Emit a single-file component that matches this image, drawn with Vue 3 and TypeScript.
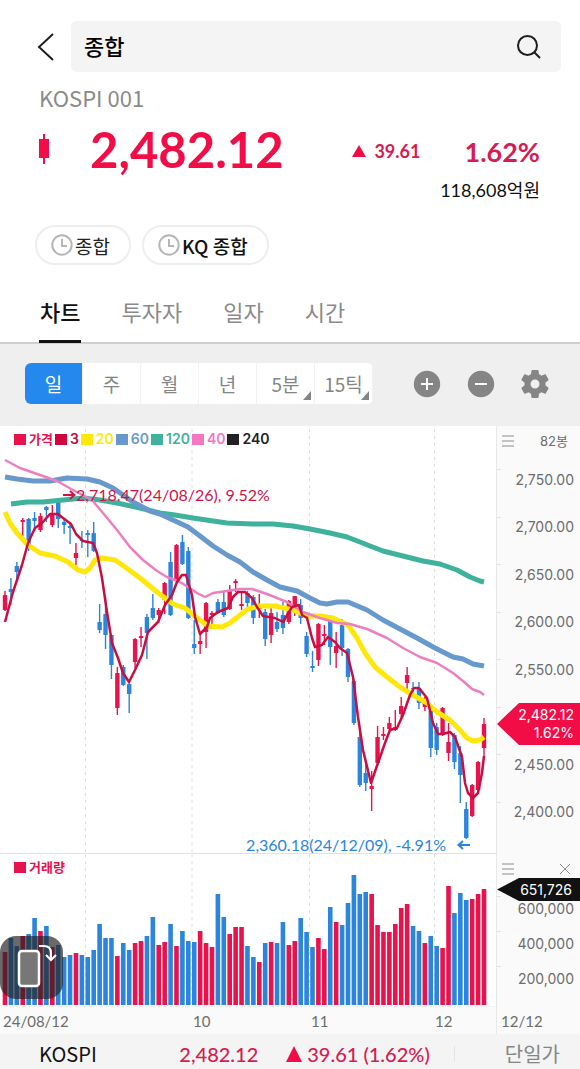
<script setup lang="ts">
import { ref } from 'vue'

type Bar = [dir: 'u' | 'd', high: number, top: number, bottom: number, low: number, volume: number]

const bars: Bar[] = [
  ['u', 165, 169, 184, 185, 53], ['d', 152, 163, 166, 179, 67], ['d', 136, 140, 146, 156, 59],
  ['u', 92, 94, 96, 110, 69], ['d', 92, 93, 119, 125, 71], ['d', 86, 92, 95, 105, 87],
  ['u', 87, 90, 104, 106, 74], ['d', 80, 81, 84, 96, 79], ['u', 79, 88, 99, 101, 58],
  ['d', 74, 76, 93, 102, 60], ['d', 92, 96, 99, 108, 48], ['d', 96, 100, 102, 118, 50],
  ['u', 117, 127, 132, 139, 52], ['d', 105, 114, 115, 122, 50], ['d', 104, 107, 109, 131, 48],
  ['d', 96, 107, 125, 126, 55], ['d', 178, 196, 204, 207, 81], ['d', 171, 188, 209, 223, 67],
  ['d', 208, 209, 239, 253, 67], ['u', 241, 247, 282, 289, 49], ['d', 239, 241, 259, 260, 62],
  ['d', 256, 258, 268, 287, 55], ['u', 212, 213, 236, 242, 62], ['u', 201, 210, 212, 221, 64],
  ['d', 188, 191, 207, 233, 69], ['d', 168, 182, 192, 194, 88], ['u', 182, 184, 189, 197, 60],
  ['u', 156, 157, 174, 188, 63], ['d', 126, 136, 189, 190, 81], ['u', 118, 119, 154, 155, 59],
  ['d', 109, 116, 138, 139, 74], ['d', 121, 125, 192, 193, 64], ['d', 194, 218, 222, 228, 63],
  ['u', 207, 215, 218, 228, 74], ['u', 176, 177, 206, 222, 62], ['u', 185, 187, 189, 203, 58],
  ['d', 173, 176, 187, 188, 111], ['d', 166, 176, 189, 191, 88], ['u', 159, 165, 183, 184, 71],
  ['u', 153, 155, 157, 166, 78], ['u', 167, 178, 180, 184, 78], ['d', 165, 167, 177, 182, 59],
  ['d', 169, 171, 192, 198, 48], ['u', 168, 181, 183, 192, 43], ['d', 183, 186, 213, 220, 62],
  ['u', 179, 187, 209, 217, 63], ['d', 186, 196, 203, 206, 62], ['d', 176, 189, 202, 208, 83],
  ['u', 174, 175, 196, 198, 60], ['u', 170, 170, 179, 190, 64], ['d', 173, 179, 192, 198, 87],
  ['d', 206, 210, 228, 231, 73], ['d', 225, 240, 242, 246, 58], ['u', 197, 198, 234, 240, 67],
  ['u', 199, 208, 210, 219, 56], ['d', 193, 194, 221, 239, 98], ['u', 206, 220, 227, 242, 83],
  ['d', 193, 199, 222, 230, 80], ['d', 222, 223, 251, 256, 102], ['d', 253, 255, 297, 299, 130],
  ['d', 301, 311, 359, 361, 111], ['d', 337, 347, 357, 365, 113], ['u', 345, 360, 363, 385, 111],
  ['u', 300, 311, 337, 339, 80], ['u', 301, 308, 310, 314, 73], ['u', 291, 297, 303, 305, 73],
  ['u', 284, 301, 304, 305, 81], ['u', 271, 280, 288, 292, 97], ['u', 241, 249, 257, 264, 101],
  ['d', 256, 262, 263, 269, 79], ['d', 256, 262, 277, 283, 74], ['u', 271, 277, 281, 285, 62],
  ['d', 283, 285, 322, 331, 69], ['d', 297, 301, 324, 329, 59], ['u', 281, 282, 309, 310, 57],
  ['u', 297, 316, 327, 335, 119], ['d', 307, 309, 336, 343, 92], ['d', 320, 327, 349, 377, 112],
  ['d', 376, 383, 412, 413, 105], ['u', 358, 359, 390, 391, 106], ['u', 335, 336, 364, 367, 111],
  ['u', 292, 298, 322, 331, 116],
]

const lines = [
  { key: 'ma120', points: '11,78 27,76 43,76 63,74 83,72 100,74 117,77 140,82 160,87 175,89 193,92 213,95 227,97 253,98 273,98 293,100 310,103 330,107 347,111 360,116 370,120 383,125 403,130 423,135 440,138 457,144 470,151 480,155 484,156' },
  { key: 'ma60', points: '5,51 17,53 33,55 50,55 67,52 87,53 100,56 113,62 133,76 150,85 160,88 173,94 188,101 200,110 213,120 227,129 240,136 253,146 267,154 280,161 297,165 310,172 320,177 327,178 337,176 348,176 367,184 383,194 400,203 417,212 435,222 453,231 463,233 473,238 484,240' },
  { key: 'ma20', points: '5,86 10,97 17,107 28,119 40,127 55,130 68,136 78,144 85,146 90,142 95,134 102,132 115,134 125,141 140,152 157,166 173,178 185,182 197,192 208,200 222,201 230,197 240,189 248,183 260,180 275,180 293,184 307,190 320,190 333,192 348,199 357,212 365,227 375,241 387,251 400,261 413,269 427,277 437,286 450,294 460,304 467,312 473,315 480,314 484,311' },
  { key: 'ma40', points: '5,34 20,42 40,49 57,55 73,64 92,74 103,87 117,104 130,121 143,134 157,145 167,151 180,156 188,161 197,167 205,171 213,167 227,165 240,163 252,163 267,168 287,176 303,186 320,192 337,197 350,198 367,203 387,212 403,222 420,231 437,237 453,247 463,255 472,263 480,266 484,269' },
  { key: 'ma3', points: '5,196 13,166 22,139 28,117 35,102 42,97 50,88 58,88 63,92 71,98 76,108 83,115 93,117 97,127 102,152 107,186 112,217 118,232 123,247 129,256 135,244 142,229 148,206 158,196 165,179 172,169 177,156 182,149 186,149 192,169 195,191 200,208 207,201 210,192 218,186 228,182 233,171 238,166 245,166 252,172 257,181 263,190 275,192 283,196 292,181 299,179 302,189 307,192 312,212 315,221 322,219 328,211 335,216 340,222 347,227 353,251 358,291 363,324 371,357 378,337 385,317 390,304 397,302 403,289 410,269 414,262 419,262 427,272 433,297 438,308 443,308 450,306 455,311 462,331 465,357 468,367 473,372 478,367 482,347 484,330' },
]

const months = [85.5, 192, 309.5, 434.5]
const barX = (i: number) => 5 + (i * 479) / 81

const legend = [
  { label: '가격', key: 'price' },
  { label: '3', key: 'ma3' },
  { label: '20', key: 'ma20' },
  { label: '60', key: 'ma60' },
  { label: '120', key: 'ma120' },
  { label: '40', key: 'ma40' },
  { label: '240', key: 'ma240' },
]

const tabs = ['차트', '투자자', '일자', '시간']
const activeTab = ref('차트')

const periods = [
  { label: '일', more: false },
  { label: '주', more: false },
  { label: '월', more: false },
  { label: '년', more: false },
  { label: '5분', more: true },
  { label: '15틱', more: true },
]
const activePeriod = ref('일')
const query = ref('종합')

const prices = ['2,750.00', '2,700.00', '2,650.00', '2,600.00', '2,550.00', '', '2,450.00', '2,400.00']
const volumes = ['600,000', '400,000', '200,000']
const dates = [
  { label: '24/08/12', x: 3 },
  { label: '10', x: 193 },
  { label: '11', x: 311 },
  { label: '12', x: 435 },
]
const dateLeft = (x: number) => ({ left: `${(x / 496) * 100}%` })
</script>

<template>
  <main class="page">
    <header class="search-row">
      <button class="back" type="button" aria-label="뒤로">
        <svg viewBox="0 0 18 32" width="18" height="32"><path d="M16 3 2 16l14 13" /></svg>
      </button>
      <form class="search" @submit.prevent>
        <input v-model="query" type="text" aria-label="종목 검색" />
        <button type="submit" aria-label="검색">
          <svg viewBox="0 0 26 26" width="26" height="26"><circle cx="11.5" cy="11.5" r="9.5" /><path d="m18.5 18.5 5.500 5.500" /></svg>
        </button>
      </form>
    </header>

    <section class="quote">
      <p class="code">KOSPI 001</p>
      <div class="quote-row">
        <svg class="candle" viewBox="0 0 10 30" width="10" height="30"><path d="M0 5h10v19H0zM4 0h2v30H4z" /></svg>
        <strong class="price">2,482.12</strong>
        <span class="change"><svg viewBox="0 0 14 12" width="14" height="12"><path d="M7 0l7 12H0z" /></svg>39.61</span>
        <span class="rate">1.62%</span>
      </div>
      <p class="amount">118,608억원</p>
    </section>

    <nav class="chips">
      <button type="button" class="chip">
        <svg viewBox="0 0 22 22" width="22" height="22"><circle cx="11" cy="11" r="9.7" /><path d="M11 5v7h5" /></svg>종합
      </button>
      <button type="button" class="chip strong">
        <svg viewBox="0 0 22 22" width="22" height="22"><circle cx="11" cy="11" r="9.7" /><path d="M11 5v7h5" /></svg>KQ 종합
      </button>
    </nav>

    <nav class="tabs" role="tablist">
      <button
        v-for="tab in tabs" :key="tab" type="button" role="tab"
        :aria-selected="tab === activeTab" :class="{ active: tab === activeTab }" @click="activeTab = tab"
      >{{ tab }}</button>
    </nav>

    <section class="toolbar">
      <div class="periods">
        <button
          v-for="p in periods" :key="p.label" type="button"
          :class="{ active: p.label === activePeriod, more: p.more }" @click="activePeriod = p.label"
        >{{ p.label }}</button>
      </div>
      <div class="tools">
        <button type="button" aria-label="확대">
          <svg viewBox="0 0 28 28" width="28" height="28"><circle cx="14" cy="14" r="13.2" /><path class="sign" d="M8 14h12M14 8v12" /></svg>
        </button>
        <button type="button" aria-label="축소">
          <svg viewBox="0 0 28 28" width="28" height="28"><circle cx="14" cy="14" r="13.2" /><path class="sign" d="M8 14h12" /></svg>
        </button>
        <button type="button" aria-label="설정">
          <svg viewBox="2 2 20 20" width="28" height="28"><path d="M19.43 12.98c.04-.32.07-.64.07-.98s-.03-.66-.07-.98l2.11-1.65c.19-.15.24-.42.12-.64l-2-3.46c-.12-.22-.39-.3-.61-.22l-2.49 1c-.52-.4-1.08-.73-1.69-.98l-.38-2.65C14.46 2.18 14.25 2 14 2h-4c-.25 0-.46.18-.49.42l-.38 2.65c-.61.25-1.17.59-1.69.98l-2.49-1c-.23-.09-.49 0-.61.22l-2 3.46c-.13.22-.07.49.12.64l2.11 1.65c-.04.32-.07.65-.07.98s.03.66.07.98l-2.11 1.65c-.19.15-.24.42-.12.64l2 3.46c.12.22.39.3.61.22l2.49-1c.52.4 1.08.73 1.69.98l.38 2.65c.03.24.24.42.49.42h4c.25 0 .46-.18.49-.42l.38-2.65c.61-.25 1.17-.59 1.69-.98l2.49 1c.23.09.49 0 .61-.22l2-3.46c.12-.22.07-.49-.12-.64l-2.11-1.65zM12 15.2a3.2 3.2 0 1 1 0-6.4 3.2 3.2 0 0 1 0 6.4z" /></svg>
        </button>
      </div>
    </section>

    <section class="chart">
      <div class="plot">
        <svg viewBox="0 0 496 427" preserveAspectRatio="none">
          <path v-for="m in months" :key="m" class="month" :d="`M${m} 3V427`" />
          <g v-for="(b, i) in bars" :key="i" :class="b[0]">
            <rect :x="barX(i) - 0.7" :y="b[1]" width="1.4" :height="b[4] - b[1]" />
            <rect :x="barX(i) - 2.2" :y="b[2]" width="4.4" :height="b[3] - b[2]" rx="0.5" />
          </g>
          <polyline v-for="l in lines" :key="l.key" :class="l.key" :points="l.points" />
        </svg>
        <ul class="legend">
          <li v-for="l in legend" :key="l.key" :class="l.key">{{ l.label }}</li>
        </ul>
        <p class="peak"><svg viewBox="0 0 13 10" width="13" height="10"><path d="M0 5h11M7 1l4.500 4L7 9" /></svg>2,718.47(24/08/26), 9.52%</p>
        <p class="trough">2,360.18(24/12/09), -4.91%<svg viewBox="0 0 13 10" width="13" height="10"><path d="M13 5H2M6 1 1.500 5 6 9" /></svg></p>
      </div>
      <aside class="axis">
        <div class="axis-head">
          <button type="button" aria-label="가격 메뉴"><svg viewBox="0 0 12 12" width="12" height="12"><path d="M0 1h12M0 6h12M0 11h12" /></svg></button>
          <span>82봉</span>
        </div>
        <ul class="price-scale">
          <li v-for="(p, i) in prices" :key="i">{{ p }}</li>
        </ul>
        <div class="tag now"><span>2,482.12</span><span>1.62%</span></div>
      </aside>

      <div class="plot volume">
        <svg viewBox="0 0 496 152" preserveAspectRatio="none">
          <path v-for="m in months" :key="m" class="month" :d="`M${m} 0V152`" />
          <rect
            v-for="(b, i) in bars" :key="i" :class="b[0]"
            :x="barX(i) - 2.3" :y="151 - b[5]" width="4.6" :height="b[5]"
          />
        </svg>
        <ul class="legend"><li class="price">거래량</li></ul>
        <button class="rotate" type="button" aria-label="화면 회전">
          <svg viewBox="0 0 63 63" width="63" height="63">
            <rect x="19" y="15" width="20" height="35" rx="3" />
            <path d="M39 10h5q7 0 7 7v6M46 19l5 5 5-5" />
          </svg>
        </button>
      </div>
      <aside class="axis volume-axis">
        <div class="axis-head">
          <button type="button" aria-label="거래량 메뉴"><svg viewBox="0 0 12 12" width="12" height="12"><path d="M0 1h12M0 6h12M0 11h12" /></svg></button>
          <button type="button" aria-label="닫기"><svg viewBox="0 0 12 12" width="12" height="12"><path d="m1 1 10 10M11 1 1 11" /></svg></button>
        </div>
        <ul class="volume-scale">
          <li v-for="v in volumes" :key="v">{{ v }}</li>
        </ul>
        <div class="tag total"><span>651,726</span></div>
      </aside>

      <div class="dates"><span v-for="d in dates" :key="d.label" :style="dateLeft(d.x)">{{ d.label }}</span></div>
      <div class="last-date">12/12</div>
    </section>

    <footer class="ticker">
      <span class="name">KOSPI</span>
      <span class="value">2,482.12</span>
      <span class="diff"><svg viewBox="0 0 16 16" width="16" height="16"><path d="M8 0l8 16H0z" /></svg><span>39.61</span><span>(1.62%)</span></span>
      <span class="single">단일가</span>
    </footer>
  </main>
</template>

<style>
body {
  margin: 0;
  background: #fff;
}
</style>

<style scoped>
.page {
  font-family: Lato, 'Noto Sans CJK KR', sans-serif;
  color: #111;
  background: #fff;
}
p, ul {
  margin: 0;
  padding: 0;
  list-style: none;
}
button {
  margin: 0;
  padding: 0;
  border: 0;
  background: none;
  font: inherit;
  color: inherit;
  cursor: pointer;
}
svg {
  display: block;
  flex: none;
}
.code, .chips, .periods, .name {
  font-family: 'Noto Sans CJK KR', sans-serif;
}

.search-row {
  display: flex;
  align-items: center;
  gap: 16px;
  padding: 21px 19px 0 37px;
}
.back path, .search path, .search circle {
  fill: none;
  stroke: #1c1c1c;
  stroke-width: 2;
}
.search {
  flex: 1;
  display: flex;
  align-items: center;
  height: 51px;
  padding: 0 19px 0 13px;
  border-radius: 6px;
  background: #f4f4f4;
}
.search input {
  flex: 1;
  min-width: 0;
  padding: 0;
  border: 0;
  outline: 0;
  background: none;
  font: 500 22px/32px Lato, 'Noto Sans CJK KR', sans-serif;
  color: #000;
}

.quote {
  padding: 11px 40px 0 39px;
}
.code {
  font-size: 22px;
  line-height: 28px;
  color: #8a8a8a;
}
.quote-row {
  display: flex;
  align-items: center;
  height: 64px;
  margin-top: 6px;
  color: #f20d46;
}
.candle {
  margin-right: 41px;
}
.candle path, .change path, .diff path {
  fill: #f20d46;
}
.price {
  font-size: 49px;
  line-height: 64px;
  font-weight: 700;
}
.change, .rate {
  padding-top: 4px;
}
.change {
  display: flex;
  align-items: center;
  gap: 8px;
  margin-left: auto;
  margin-right: 44px;
  color: #d81b50;
  font-size: 18px;
  font-weight: 700;
}
.rate {
  color: #d81b50;
  font-size: 27px;
  font-weight: 700;
}
.amount {
  margin-top: -3px;
  font-size: 18px;
  line-height: 24px;
  text-align: right;
}

.chips {
  display: flex;
  gap: 11px;
  padding: 23px 35px 0;
}
.chip {
  display: flex;
  align-items: center;
  gap: 2px;
  height: 40px;
  padding: 0 19px 0 14px;
  border: 2px solid #eee;
  border-radius: 20px;
  font-size: 19px;
  font-weight: 400;
  color: #222;
}
.chip.strong {
  font-weight: 500;
  color: #111;
}
.chip circle, .chip path {
  fill: none;
  stroke: #b5b5b5;
  stroke-width: 2;
}

.tabs {
  display: flex;
  gap: 39px;
  padding: 20px 39px 0;
  border-bottom: 2px solid #cfcfcf;
}
.tabs button {
  height: 58px;
  padding: 0 1px;
  margin-bottom: -1px;
  border-bottom: 3px solid transparent;
  font-size: 22px;
  line-height: 55px;
  color: #8a8a8a;
}
.tabs .active {
  border-color: #111;
  color: #111;
  font-weight: 500;
}

.toolbar {
  display: flex;
  align-items: center;
  justify-content: space-between;
  box-sizing: border-box;
  height: 82px;
  padding: 0 31px 3px 25px;
  background: #efefef;
}
.periods {
  display: flex;
  overflow: hidden;
  border-radius: 6px;
  background: #fff;
}
.periods button {
  position: relative;
  width: 58px;
  height: 41px;
  border-right: 1px solid #f2f2f2;
  font-size: 19px;
  color: #858585;
}
.periods .active {
  background: #2488ee;
  color: #fff;
}
.periods .more::after {
  content: '';
  position: absolute;
  right: 3px;
  bottom: 4px;
  border-left: 8px solid transparent;
  border-bottom: 9px solid #858585;
}
.tools {
  display: flex;
  gap: 26px;
}
.tools circle, .tools path {
  fill: #858585;
}
.tools .sign {
  fill: none;
  stroke: #fff;
  stroke-width: 2;
}

.chart {
  display: grid;
  grid-template-columns: 1fr 84px;
}
.plot {
  position: relative;
  height: 427px;
  border-bottom: 1px solid #e2e2e2;
}
.plot > svg {
  width: 100%;
  height: 100%;
}
.plot.volume {
  height: 152px;
  border-bottom-color: #f2f2f2;
}
.month {
  stroke: #dedede;
  stroke-dasharray: 3 4;
}
.u {
  fill: #e8124c;
}
.d {
  fill: #2b85dd;
}
polyline {
  fill: none;
  stroke-linejoin: round;
}
polyline.ma120 { stroke: #3eb29c; stroke-width: 5; }
polyline.ma60 { stroke: #6799cc; stroke-width: 5; }
polyline.ma20 { stroke: #ffe70a; stroke-width: 5; }
polyline.ma40 { stroke: #ed7fc0; stroke-width: 2.5; }
polyline.ma3 { stroke: #c80f42; stroke-width: 2.5; }

.legend {
  position: absolute;
  top: 4px;
  left: 14px;
  display: flex;
  gap: 2px;
  font: 600 14px/18px Inter, 'Noto Sans CJK KR', sans-serif;
}
.legend li {
  display: flex;
  align-items: center;
  gap: 3px;
}
.legend li::before {
  content: '';
  width: 12px;
  height: 11px;
  background: currentColor;
}
.legend .price { color: #e8124c; font-size: 13px; line-height: 18px; }
.legend .ma3 { color: #d0063c; }
.legend .ma20 { color: #ffe70a; }
.legend .ma60 { color: #6799cc; }
.legend .ma120 { color: #3eb29c; }
.legend .ma40 { color: #f676c3; }
.legend .ma240 { color: #222; }

.peak, .trough {
  position: absolute;
  display: flex;
  align-items: center;
  font-size: 16px;
  line-height: 20px;
  white-space: nowrap;
}
.peak {
  top: 59px;
  left: 63px;
  color: #d0144a;
}
.trough {
  right: 26px;
  bottom: -2px;
  gap: 11px;
  color: #2b85dd;
}
.peak path, .trough path {
  fill: none;
  stroke: currentColor;
  stroke-width: 2;
}

.axis {
  position: relative;
  border-left: 1px solid #e8e8e8;
  background: #fafafa;
  font: 13px/18px Inter, 'Noto Sans CJK KR', sans-serif;
  color: #6c6c6c;
}
.axis-head {
  display: flex;
  align-items: center;
  justify-content: space-between;
  height: 30px;
  padding: 0 12px 0 5px;
}
.volume-axis .axis-head {
  padding-right: 9px;
}
.axis-head path {
  fill: none;
  stroke: #8c8c8c;
}
.price-scale {
  display: grid;
  grid-template-rows: repeat(8, 1fr);
  height: 380px;
}
.price-scale li, .volume-scale li {
  position: relative;
  display: flex;
  align-items: center;
  justify-content: flex-end;
  padding-right: 6px;
  font-size: 14px;
}
.price-scale li::before, .volume-scale li::before {
  content: '';
  position: absolute;
  left: 0;
  top: 13px;
  width: 4px;
  height: 1px;
  background: #e2e2e2;
}
.volume-scale {
  display: grid;
  grid-template-rows: repeat(3, 35px);
  padding-top: 7px;
}
.volume-scale li::before {
  top: 5px;
}
.tag {
  position: absolute;
  left: 0;
  right: 0;
  display: flex;
  flex-direction: column;
  align-items: flex-end;
  justify-content: center;
  padding-right: 6px;
  font-size: 14px;
  color: #fff;
}
.now {
  top: 277px;
  height: 42px;
  background: #f20d46;
  clip-path: polygon(0 50%, 22px 0, 100% 0, 100% 100%, 22px 100%);
}
.total {
  top: 24px;
  height: 23px;
  padding-right: 8px;
  background: #111;
  clip-path: polygon(0 50%, 22px 0, 100% 0, 100% 100%, 22px 100%);
}
.rotate {
  position: absolute;
  left: 0;
  bottom: 7px;
  border-radius: 16px;
  background: rgb(35 35 35 / 68%);
}
.rotate rect {
  fill: #777;
  stroke: #fff;
  stroke-width: 2.5;
}
.rotate path {
  fill: none;
  stroke: #fff;
  stroke-width: 2;
}

.dates, .last-date {
  position: relative;
  height: 27px;
  background: #fafafa;
  font-size: 15px;
  line-height: 28px;
  color: #6c6c6c;
}
.dates span {
  position: absolute;
}
.last-date {
  padding-left: 4px;
  border-left: 1px solid #e8e8e8;
}

.ticker {
  display: flex;
  align-items: center;
  height: 36px;
  padding: 3px 20px 0 39px;
  box-sizing: border-box;
  background: #f4f4f4;
  font-size: 20px;
  line-height: 28px;
}
.value, .diff {
  color: #d81b50;
  font-weight: 500;
}
.value {
  margin-left: auto;
}
.diff {
  display: flex;
  align-items: center;
  gap: 5px;
  margin-left: 28px;
}
.single {
  margin-left: 24px;
  padding-left: 50px;
  border-left: 1px solid #e2e2e2;
  line-height: 16px;
  color: #858585;
}
</style>
